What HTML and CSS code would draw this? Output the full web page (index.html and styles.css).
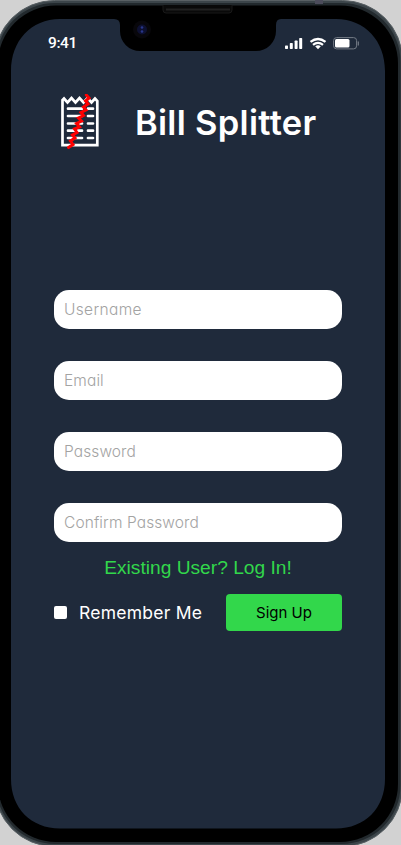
FILE: index.html
```html
<!DOCTYPE html>
<html lang="en">
<head>
<meta charset="utf-8">
<title>Bill Splitter</title>
<link rel="stylesheet" href="styles.css">
</head>
<body>
<main class="phone">
  <svg class="frame" viewBox="0 0 401 845" aria-hidden="true">
    <rect x="-5.500" y="0.500" width="408" height="846" rx="60" fill="#3c454a" stroke="#596064"/>
    <rect x="-4" y="3" width="404.500" height="841" rx="59" fill="#22292d"/>
    <rect x="-2" y="5.500" width="400" height="836.500" rx="58" fill="#000"/>
    <rect x="315" y="0" width="8" height="4" fill="#4c4c5b"/>
    <path d="M60 19H114Q120 19 120 25V31A20 20 0 0 0 140 51H256A20 20 0 0 0 276 31V25Q276 19 281 19H336C365 19 385 41 385 71V779C385 808 365 828.500 336 828.500H60C31 828.500 11 808 11 779V71C11 41 31 19 60 19Z" fill="#1f2a3b"/>
    <path d="M163 5V10Q163 13 166 13H229Q232 13 232 10V5" fill="#090909" stroke="#191919"/>
    <path d="M166 9.500H230" stroke="#202020" stroke-width="2"/>
    <circle cx="142" cy="29.500" r="9" fill="#08070b"/>
    <circle cx="142" cy="29.500" r="5" fill="#0d1031"/>
    <circle cx="142" cy="27.500" r="1.300" fill="#28368a"/>
    <circle cx="142" cy="31.500" r="1.300" fill="#28368a"/>
  </svg>
  <header class="status">
    <span class="time">9:41</span>
    <svg class="indicators" viewBox="0 0 75 14" aria-hidden="true">
      <g fill="#fff">
        <rect x="0" y="8.500" width="3" height="3.500" rx=".7"/>
        <rect x="4.800" y="6" width="3" height="6" rx=".7"/>
        <rect x="9.600" y="3.500" width="3" height="8.500" rx=".7"/>
        <rect x="14.200" y="1" width="3" height="11" rx=".7"/>
        <path d="M30.200 9.200Q33 7.200 35.800 9.200L33 12.300Z"/>
      </g>
      <g fill="none" stroke="#fff" stroke-width="2.300">
        <path d="M25.500 4.900Q33-1 40.500 4.900"/>
        <path d="M28 7.800Q33 3.900 38 7.800"/>
      </g>
      <rect x="48.600" y="0.600" width="23" height="11.300" rx="3" fill="none" stroke="#737b86"/>
      <rect x="50" y="2.100" width="14.500" height="8.400" rx="1.500" fill="#fff"/>
      <path d="M73.300 4.500V8.500" stroke="#737b86" stroke-width="1.200"/>
    </svg>
  </header>
  <div class="brand">
    <svg class="logo" viewBox="0 0 40 57" aria-hidden="true">
      <path d="M2.500 51.200V6L4 4.500L7.500 8.500L11.500 4L15.500 8.500L19.500 4L23.500 8.500L27.500 4L31.500 8.500L35 4.500L37.300 7V51.200Z" fill="none" stroke="#fff" stroke-width="2.700"/>
      <path d="M8 14.700H22M28 14.700H33M8 22H22M28 22H33M8 29.500H22M28 29.500H33M8 36.700H22M28 36.700H33M8 44H22M28 44H33" stroke="#fff" stroke-width="2.700" stroke-linecap="round"/>
      <path d="M26.300 1L29 4L25.500 7L28 10L23.500 13L26 16L21 18.500L23.500 21.500L18.500 24L21.500 27L16.500 29.500L19.500 33L14.500 35L17 38.500L12.500 41L15 44L10.500 47L13 50.500L8.500 53.500" fill="none" stroke="#f00" stroke-width="3" stroke-linecap="round"/>
    </svg>
    <h1>Bill Splitter</h1>
  </div>
  <form class="form">
    <input class="username" type="text" placeholder="Username">
    <input class="email" type="email" placeholder="Email">
    <input class="password" type="password" placeholder="Password">
    <input class="confirm" type="password" placeholder="Confirm Password">
    <a class="login">Existing User? Log In!</a>
    <div class="actions">
      <label class="remember"><span class="box"></span><span class="remember-text">Remember Me</span></label>
      <button type="button">Sign Up</button>
    </div>
  </form>
</main>
</body>
</html>
```
FILE: styles.css
```css
* { box-sizing: border-box; }

body {
  margin: 0;
  background: #d2d2d2;
  font-family: Inter, sans-serif;
  font-feature-settings: "cv11";
  overflow: hidden;
}

.phone {
  position: relative;
  isolation: isolate;
  width: 401px;
  height: 845px;
  overflow: hidden;
}

.frame {
  position: absolute;
  inset: 0;
  z-index: -1;
  width: 401px;
  height: 845px;
}

.status {
  display: flex;
  justify-content: space-between;
  align-items: center;
  height: 14px;
  margin: 37px 41px 0 48px;
}

.time {
  padding-bottom: 1px;
  color: #fff;
  font: 500 15.500px/13px Roboto, sans-serif;
  letter-spacing: -0.4px;
}

.indicators { width: 75px; height: 14px; }

.brand {
  display: flex;
  align-items: center;
  gap: 35px;
  height: 57px;
  margin: 43px 0 0 60px;
}

.logo { width: 40px; height: 57px; }

h1 {
  margin: 0;
  color: #fff;
  font-size: 34.500px;
  font-weight: 600;
  line-height: 57px;
  letter-spacing: 0.3px;
  white-space: nowrap;
}

.form {
  display: flex;
  flex-direction: column;
  width: 288px;
  margin: 138.500px 0 0 54px;
}

input {
  width: 100%;
  height: 39.500px;
  margin: 0 0 31.500px;
  padding: 0 10px;
  border: 0;
  border-radius: 15px;
  background: #fff;
  font: 300 15.500px Inter, sans-serif;
  font-feature-settings: "cv11";
  letter-spacing: 0.1px;
}

.username { letter-spacing: 0.35px; }

input::placeholder { color: #a3a3a3; opacity: 1; }

.confirm { margin-bottom: 13px; }

.login {
  align-self: center;
  color: #32d74b;
  font: 19.200px/25px "Liberation Sans", sans-serif;
  white-space: nowrap;
}

.actions {
  display: flex;
  justify-content: space-between;
  align-items: center;
  margin-top: 14px;
}

.remember {
  display: flex;
  align-items: center;
  gap: 12px;
  color: #fff;
  font-size: 17.500px;
  letter-spacing: 0.25px;
  white-space: nowrap;
}

.box {
  width: 13px;
  height: 13px;
  border-radius: 2px;
  background: #fff;
}

button {
  width: 116px;
  height: 37px;
  padding: 0;
  border: 0;
  border-radius: 4px;
  background: #32d74b;
  color: #000;
  font: 400 15px Inter, sans-serif;
  font-feature-settings: "cv11";
}
```
